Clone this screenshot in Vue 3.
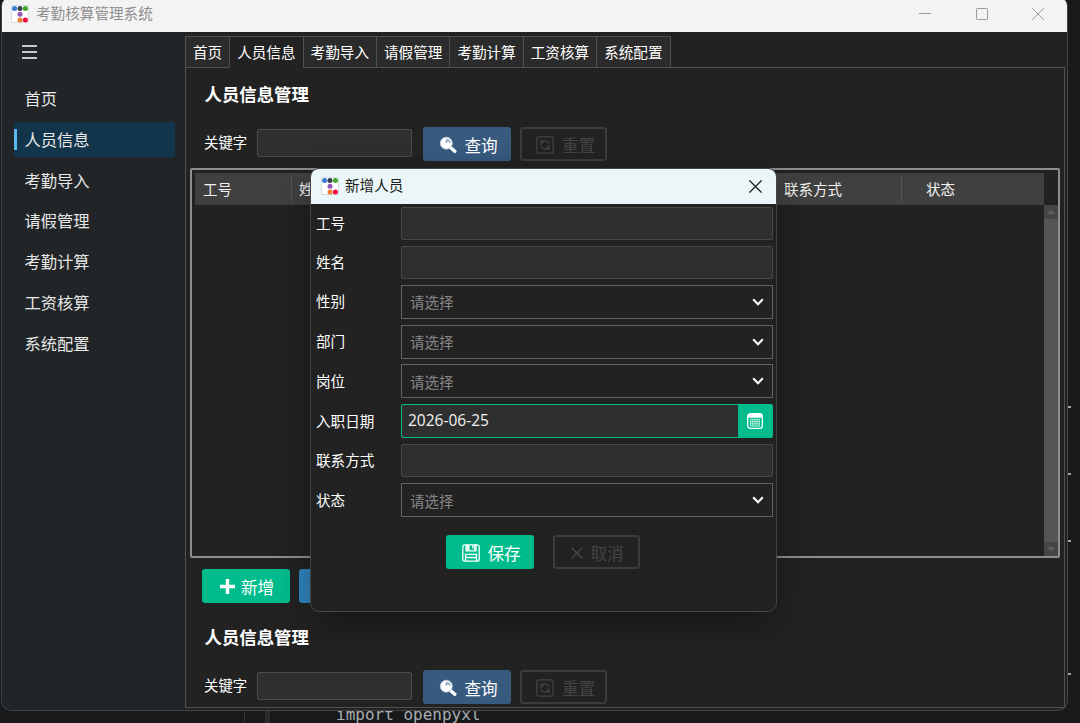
<template>
    <div class="desktop">
        <div class="code-line">import openpyxl</div>
        <i class="guide guide-a"></i>
        <i class="guide guide-b"></i>
        <i v-for="y in marks" :key="y" class="mark" :style="{ top: y + 'px' }"></i>

        <div class="window">
            <div class="titlebar">
                <svg class="logo" viewBox="0 0 18 18">
                    <rect x=".5" y=".5" width="17" height="17" rx="1.5" fill="#fff" stroke="#d9dcde" />
                    <circle v-for="d in dots" :key="d.c" :cx="d.x" :cy="d.y" r="2.5" :fill="d.c" />
                </svg>
                <span class="app-name">考勤核算管理系统</span>
                <div class="win-buttons">
                    <svg viewBox="0 0 12 12"><path d="M0 5.5h12" /></svg>
                    <svg viewBox="0 0 12 12"><rect x=".5" y=".5" width="11" height="11" rx=".8" /></svg>
                    <svg viewBox="0 0 12 12"><path d="M.3.3l11.4 11.4M11.7.3L.3 11.7" /></svg>
                </div>
            </div>

            <div class="body">
                <div class="sidebar">
                    <svg class="burger" viewBox="0 0 15 14"><path d="M0 1h15M0 7h15M0 13h15" /></svg>
                    <div class="menu">
                        <div v-for="item in pages" :key="item" class="menu-item" :class="{ active: item === current }" @click="current = item">
                            {{ item }}
                        </div>
                    </div>
                </div>

                <div class="main">
                    <div class="tabs">
                        <div v-for="item in pages" :key="item" class="tab" :class="{ active: item === current }" @click="current = item">
                            {{ item }}
                        </div>
                        <div class="tab-rest"></div>
                    </div>

                    <div class="panel">
                        <div v-for="n in 2" :key="n" class="section">
                            <h2>人员信息管理</h2>
                            <div class="search">
                                <label>关键字</label>
                                <input type="text" class="keyword">
                                <button class="btn primary">
                                    <svg class="ico" viewBox="0 0 18 18">
                                        <path d="M11.5 11.5l4.3 3.8" stroke="#fff" stroke-width="3.4" stroke-linecap="round" />
                                        <circle cx="7.3" cy="7.2" r="6" fill="#fff" stroke="#b9cbdc" stroke-width=".8" />
                                        <path d="M7.2 3.6a3.6 3.6 0 0 1 3.6 3.4" fill="none" stroke="#7695b3" stroke-width="1.2" />
                                        <circle cx="7.5" cy="5.4" r=".9" fill="#456b91" />
                                    </svg>
                                    查询
                                </button>
                                <button class="btn ghost reset">
                                    <svg class="ico" viewBox="0 0 18 18" fill="none" stroke="currentColor" stroke-width="1.2">
                                        <rect x=".8" y=".8" width="16.4" height="16.4" rx="2" />
                                        <path d="M5 9V5.2h3.8M5.2 5.4l2.2 2.2M8.3 5.2h1.8a2.6 2.6 0 0 1 2.6 2.8M13 9v3.8H9.2M12.8 12.6l-2.2-2.2M9.7 12.8H8a2.6 2.6 0 0 1-2.7-2.7" />
                                    </svg>
                                    重置
                                </button>
                            </div>

                            <template v-if="n === 1">
                                <div class="table">
                                    <div class="thead">
                                        <div class="th th-id">工号</div>
                                        <div class="th th-name">姓名</div>
                                        <div class="th th-phone">联系方式</div>
                                        <div class="th th-state">状态</div>
                                    </div>
                                    <div class="scroll">
                                        <div class="arrow"><svg viewBox="0 0 8 4"><path d="M0 4L4 0l4 4z" /></svg></div>
                                        <div class="thumb"></div>
                                        <div class="arrow"><svg viewBox="0 0 8 4"><path d="M0 0l4 4 4-4z" /></svg></div>
                                    </div>
                                </div>
                                <div class="actions">
                                    <button class="btn success add">
                                        <svg class="plus" viewBox="0 0 15 15"><path d="M7.5 0v15M0 7.5h15" /></svg>
                                        新增
                                    </button>
                                    <button class="btn info"></button>
                                </div>
                            </template>
                        </div>
                    </div>
                </div>
            </div>
        </div>

        <div class="dialog">
            <div class="dialog-head">
                <svg class="logo" viewBox="0 0 18 18">
                    <rect x=".5" y=".5" width="17" height="17" rx="1.5" fill="#fff" stroke="#d3dcde" />
                    <circle v-for="d in dots" :key="d.c" :cx="d.x" :cy="d.y" r="2.5" :fill="d.c" />
                </svg>
                <span>新增人员</span>
                <svg class="close" viewBox="0 0 12 12"><path d="M.3.3l11.4 11.4M11.7.3L.3 11.7" /></svg>
            </div>
            <div class="form">
                <div v-for="f in fields" :key="f.label" class="row" :class="f.type">
                    <label>{{ f.label }}</label>
                    <div v-if="f.type === 'select'" class="field">
                        <span>请选择</span>
                        <svg class="chevron" viewBox="0 0 12 8"><path d="M1.2 1.2L6 6.2l4.8-5" /></svg>
                    </div>
                    <div v-else-if="f.type === 'date'" class="field">
                        <span>{{ f.value }}</span>
                        <div class="pick">
                            <svg viewBox="0 0 16 16">
                                <rect x=".7" y=".7" width="14.6" height="14.6" rx="2.6" fill="none" stroke="#fff" stroke-width="1.3" />
                                <path d="M.7 4.8V3A2.4 2.4 0 0 1 3 .7h10A2.4 2.4 0 0 1 15.3 3v1.8z" fill="#fff" />
                                <path d="M3.5 6.3h9v6.8h-9zM3.5 8.6h9M3.5 10.8h9M5.8 6.3v6.8M8 6.3v6.8M10.2 6.3v6.8" fill="none" stroke="#c8f3e6" stroke-width=".8" />
                            </svg>
                        </div>
                    </div>
                    <div v-else class="field"></div>
                </div>
            </div>
            <div class="dialog-foot">
                <button class="btn success">
                    <svg class="ico" viewBox="0 0 18 18" fill="none" stroke="#fff" stroke-width="1.3">
                        <path d="M2.7.8h12.6a1.9 1.9 0 0 1 1.9 1.9v12.6a1.9 1.9 0 0 1-1.9 1.9H2.7a1.9 1.9 0 0 1-1.9-1.9V2.7A1.9 1.9 0 0 1 2.7.8z" />
                        <path d="M4 1v5.8h10V1M3.5 17v-6.6h11V17M3.5 13.5h11" />
                        <path d="M4.5 1h3v5h-3zM12 1h1.6v5H12z" fill="#fff" stroke="none" />
                        <path d="M10.8 1.5v3" />
                    </svg>
                    保存
                </button>
                <button class="btn ghost cancel">
                    <svg class="cross" viewBox="0 0 12 12"><path d="M.5.5l11 11M11.5.5l-11 11" /></svg>
                    取消
                </button>
            </div>
        </div>
    </div>
</template>

<script setup>
import { ref } from 'vue';

const current = ref('人员信息');
const pages = ['首页', '人员信息', '考勤导入', '请假管理', '考勤计算', '工资核算', '系统配置'];

const dots = [
    { x: 3.6, y: 3.6, c: '#3a7bd5' },
    { x: 9, y: 3.6, c: '#3a3f4c' },
    { x: 14.4, y: 3.6, c: '#43a62c' },
    { x: 9, y: 9.2, c: '#9258b8' },
    { x: 9, y: 15, c: '#f08030' },
    { x: 14.4, y: 15, c: '#f5073e' },
];

const fields = [
    { label: '工号', type: 'text' },
    { label: '姓名', type: 'text' },
    { label: '性别', type: 'select' },
    { label: '部门', type: 'select' },
    { label: '岗位', type: 'select' },
    { label: '入职日期', type: 'date', value: '2026-06-25' },
    { label: '联系方式', type: 'text' },
    { label: '状态', type: 'select' },
];

// bits of the editor peeking out behind the window
const marks = [406, 473, 540, 673];
</script>

<style>
body {
    margin: 0;
    overflow: hidden;
    background: #17191a;
}
</style>

<style scoped>
* {
    box-sizing: border-box;
}

.desktop {
    position: relative;
    width: 1080px;
    height: 723px;
    overflow: hidden;
    background: #17191a;
    color: #fff;
    font-family: "Open Sans", "Noto Sans CJK SC", sans-serif;
    font-size: 14.5px;
}

svg {
    display: block;
    flex: none;
}

.code-line {
    position: absolute;
    left: 336px;
    top: 705px;
    font: 16px/20px "DejaVu Sans Mono", monospace;
    color: #a9adb3;
}

.guide {
    position: absolute;
    top: 711px;
    height: 12px;
    width: 1px;
    background: #36383a;
}

.guide-a { left: 244px; }
.guide-b { left: 265px; width: 5px; background: #292b2c; }

.mark {
    position: absolute;
    left: 1067px;
    width: 4px;
    height: 2px;
    background: #a5a7a8;
}

.window {
    position: absolute;
    left: 1px;
    top: -2px;
    width: 1067px;
    height: 713px;
    display: flex;
    flex-direction: column;
    border: 1px solid #414344;
    border-top: 0;
    border-radius: 8px 8px 10px 10px;
    background: #222;
    overflow: hidden;
}

.titlebar {
    flex: none;
    height: 34px;
    padding: 2px 23px 4px 9px;
    display: flex;
    align-items: center;
    background: #f3f3f3;
}

.logo {
    width: 18px;
    height: 18px;
    margin-top: -1px;
}

.app-name {
    margin: -4px 0 0 7px;
    font-size: 14.6px;
    color: #8f8f8f;
}

.win-buttons {
    margin-left: auto;
    display: flex;
    gap: 44.5px;
}

.win-buttons svg {
    width: 12px;
    height: 12px;
    fill: none;
    stroke: #999;
}

.body {
    flex: 1;
    min-height: 0;
    display: flex;
}

.sidebar {
    width: 183px;
    padding: 13px 10px 0 12px;
    background: #212527;
}

.burger {
    width: 15px;
    height: 14px;
    margin-left: 8px;
    stroke: #fff;
    stroke-width: 1.7;
}

.menu {
    margin-top: 22px;
    display: flex;
    flex-direction: column;
    gap: 5.75px;
}

.menu-item {
    position: relative;
    height: 35px;
    padding-left: 10.5px;
    line-height: 37px;
    font-size: 16.3px;
    color: #e8e8e8;
}

.menu-item.active {
    background: #12354c;
}

.menu-item.active::before {
    content: "";
    position: absolute;
    left: 0;
    top: 7px;
    width: 3px;
    height: 21px;
    background: #5bb9ef;
}

.main {
    flex: 1;
    min-width: 0;
    padding: 4px 2px 2px 0;
    display: flex;
    flex-direction: column;
}

.tabs {
    height: 32px;
    display: flex;
}

.tab {
    padding: 0 7px;
    line-height: 31px;
    font-size: 14.6px;
    background: #2b2b2b;
    border: 1px solid #505050;
    border-right: 0;
    white-space: nowrap;
}

.tab.active {
    background: #222;
    border-bottom-color: #222;
}

.tab-rest {
    flex: 1;
    border-left: 1px solid #505050;
    border-bottom: 1px solid #505050;
}

.panel {
    flex: 1;
    min-height: 0;
    overflow: hidden;
    padding: 0 4px;
    border: 1px solid #505050;
    border-top: 0;
}

.section {
    height: 543px;
}

h2 {
    margin: 0;
    padding: 13px 0 0 14.5px;
    font-size: 17.4px;
    line-height: 26px;
    font-weight: 700;
}

.search {
    margin-top: 20px;
    padding-left: 14px;
    display: flex;
    align-items: center;
}

.keyword {
    width: 155px;
    height: 28px;
    margin: -3px 11px 0 10px;
    padding: 0 6px;
    border: 1px solid #4c4c4c;
    border-radius: 2px;
    background: #2f2f2f;
    color: #fff;
    outline: none;
}

.search label {
    width: 43px;
    line-height: 20px;
    margin-top: -2px;
    font-size: 14.4px;
    white-space: nowrap;
}

.btn {
    flex: none;
    width: 88px;
    height: 34px;
    padding: 1px 12px 0 16px;
    display: flex;
    align-items: center;
    gap: 7.5px;
    border: 0;
    border-radius: 3px;
    font-family: inherit;
    font-size: 16.6px;
    color: #fff;
    white-space: nowrap;
}

.ico {
    width: 18px;
    height: 18px;
}

.primary { background: #375a7f; }
.success { background: #00bc8c; }
.info { background: #3185c0; }

.ghost {
    width: 87px;
    padding: 0 12px 0 14px;
    border: 2px solid #3c3c3c;
    background: transparent;
    color: #444;
}

.reset {
    margin-left: 9px;
    padding-top: 1px;
    gap: 8px;
}

.table {
    height: 390px;
    margin-top: 7px;
    display: flex;
    border: 2px solid #8e8e8e;
    border-radius: 2px;
}

.thead {
    flex: 1;
    height: 32px;
    margin: 3px 0 0 3px;
    display: flex;
    align-items: center;
    background: #404040;
    color: #f0f0f0;
}

.th {
    height: 26px;
    line-height: 27px;
    padding-left: 8px;
    border-right: 1px solid #555;
}

.th-id { width: 97px; }
.th-name { width: 484px; padding-left: 7px; border-right: 0; }
.th-phone { width: 126px; }
.th-state { padding-left: 24px; border-right: 0; }

.scroll {
    width: 14px;
    margin-top: 35px;
    display: flex;
    flex-direction: column;
}

.arrow {
    height: 14px;
    display: flex;
    align-items: center;
    justify-content: center;
    background: #454545;
}

.arrow svg {
    width: 8px;
    height: 4px;
    fill: #5f5f5f;
}

.thumb {
    flex: 1;
    background: #555;
}

.actions {
    margin-top: 11px;
    padding-left: 12px;
    display: flex;
    gap: 9px;
}

.add {
    padding-left: 18px;
    gap: 6px;
}

.plus {
    width: 15px;
    height: 15px;
    stroke: #fff;
    stroke-width: 3.4;
}

.dialog {
    position: absolute;
    left: 310px;
    top: 168px;
    width: 467px;
    height: 444px;
    border: 1px solid #444;
    border-radius: 9px;
    background: #222;
    box-shadow: 0 12px 36px rgba(0, 0, 0, 0.32);
    overflow: hidden;
}

.dialog-head {
    height: 35px;
    padding: 0 14px 0 10px;
    display: flex;
    align-items: center;
    background: #eaf6f8;
    color: #1b1b1b;
    font-size: 14.6px;
}

.dialog-head span {
    margin: -5px 0 0 6px;
}

.close {
    width: 13px;
    height: 13px;
    margin: -1px 0 0 auto;
    stroke: #222;
    stroke-width: 1.2;
}

.form {
    padding: 3px 3px 0 5px;
    display: flex;
    flex-direction: column;
    gap: 5.86px;
}

.row {
    height: 34px;
    display: flex;
    align-items: center;
}

.row.text {
    height: 33px;
}

.row label {
    width: 85px;
    margin-top: -2px;
    font-size: 14.6px;
}

.field {
    flex: 1;
    height: 100%;
    display: flex;
    align-items: center;
    border: 1px solid #484848;
    border-radius: 2px;
    background: #2f2f2f;
}

.select .field {
    padding: 0 8px;
    justify-content: space-between;
    border-color: #626262;
    border-radius: 0;
    background: #222;
    color: #888;
}

.chevron {
    width: 12px;
    height: 8px;
    fill: none;
    stroke: #fff;
    stroke-width: 2.1;
}

.date .field {
    padding-left: 6px;
    justify-content: space-between;
    border-color: #00bc8c;
    font-size: 15.5px;
    color: #f2f2f2;
}

.date .field span {
    margin-top: -2px;
}

.pick {
    width: 34px;
    height: 100%;
    display: flex;
    align-items: center;
    justify-content: center;
    background: #00bc8c;
}

.pick svg {
    width: 16px;
    height: 16px;
}

.dialog-foot {
    margin-top: 18px;
    padding-left: 135px;
    display: flex;
    gap: 19px;
}

.cross {
    width: 12px;
    height: 12px;
    margin-left: 2px;
    stroke: #484848;
    stroke-width: 1.3;
}

.cancel {
    padding-top: 1px;
}
</style>
